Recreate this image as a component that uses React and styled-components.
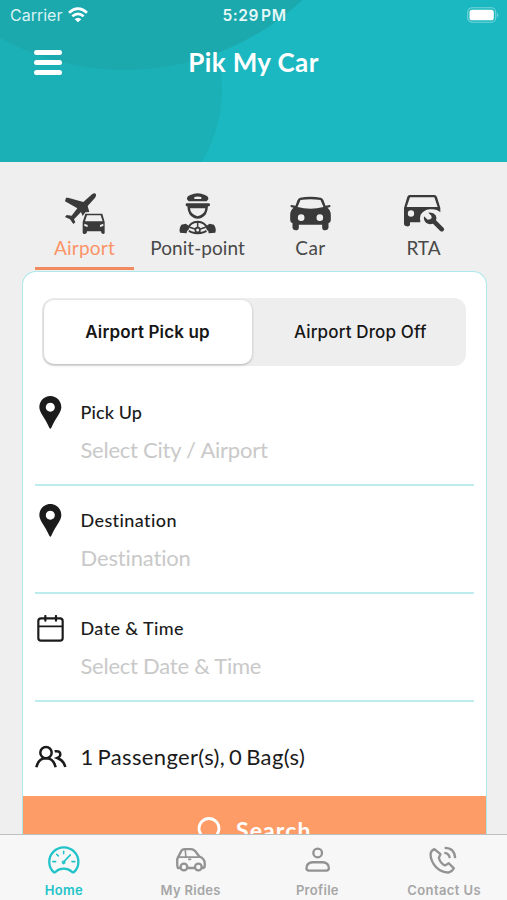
import React from 'react';
import styled, { createGlobalStyle } from 'styled-components';

const GlobalStyle = createGlobalStyle`
    * {
        box-sizing: border-box;
    }

    body {
        margin: 0;
        background: #efefef;
    }
`;

const Screen = styled.div`
    display: flex;
    flex-direction: column;
    width: 507px;
    height: 900px;
    overflow: hidden;
    background: #efefef;
    font-family: Lato, "Liberation Sans", sans-serif;
    font-variant-ligatures: none;
`;

const Header = styled.header`
    position: relative;
    height: 162px;
    flex-shrink: 0;
    background: #1bb8c1;
    color: white;
`;

const HeaderShapes = styled.svg`
    position: absolute;
    inset: 0;
`;

const StatusBar = styled.div`
    position: relative;
    display: grid;
    grid-template-columns: 1fr auto 1fr;
    align-items: center;
    height: 30px;
    padding: 0 8px 0 10px;
    font-family: Inter, sans-serif;
    font-size: 16px;
`;

const Carrier = styled.div`
    display: flex;
    align-items: center;
    gap: 6px;
    color: #d9f3f4;
`;

const Clock = styled.div`
    font-size: 15.5px;
    font-weight: 600;
    letter-spacing: 0.6px;
    word-spacing: -2.5px;
    color: #e6f8f8;
`;

const Battery = styled.svg`
    justify-self: end;
`;

const TitleBar = styled.div`
    position: relative;
    display: grid;
    grid-template-columns: 60px 1fr 60px;
    align-items: center;
    height: 64px;
    padding: 0 34px;
`;

const Title = styled.h1`
    margin: 0;
    text-align: center;
    font-size: 26px;
    font-weight: 700;
    letter-spacing: 0.4px;
`;

const MenuButton = styled.button`
    display: flex;
    flex-direction: column;
    gap: 5px;
    width: 28px;
    padding: 0;
    border: none;
    background: none;
`;

const MenuLine = styled.span`
    height: 5px;
    border-radius: 3px;
    background: white;
`;

const Tabs = styled.nav`
    display: flex;
    height: 109px;
    flex-shrink: 0;
    padding: 30px 27px 0 28px;
`;

const Tab = styled.div`
    display: flex;
    flex-direction: column;
    align-items: center;
    width: 113px;
    color: ${({ $active }) => ($active ? "#fb9467" : "#494949")};
`;

const TabIcon = styled.svg`
    width: 42.67px;
    height: 42.67px;
    color: #3a3a3a;
    flex-shrink: 0;
`;

const TabLabel = styled.span`
    height: 26px;
    line-height: 26px;
    white-space: nowrap;
    font-size: 19px;
    letter-spacing: ${({ $spacing }) => $spacing || "0"};
`;

const TabLine = styled.span`
    width: 99px;
    height: 3px;
    margin-top: 6px;
    background: #f28a5f;
`;

const Card = styled.main`
    flex: 1;
    min-height: 0;
    overflow: hidden;
    margin: 0 20px 0 21.5px;
    border: 1.5px solid #aee8eb;
    border-bottom: none;
    border-radius: 14px 14px 0 0;
    background: white;
`;

const Segment = styled.div`
    display: flex;
    height: 68px;
    margin: 26px 20px 0 19px;
    padding: 2px;
    border-radius: 12px;
    background: #eeeeee;
`;

const SegmentItem = styled.div`
    display: flex;
    flex: ${({ $active }) => ($active ? "0 0 208px" : "1")};
    align-items: center;
    justify-content: center;
    padding-left: ${({ $active }) => ($active ? "0" : "5px")};
    border-radius: 10px;
    font-family: Inter, sans-serif;
    font-size: 17px;
    font-weight: ${({ $active }) => ($active ? 600 : 500)};
    letter-spacing: 0.14px;
    color: #161616;
    background: ${({ $active }) => ($active ? "white" : "transparent")};
    box-shadow: ${({ $active }) => ($active ? "0 1px 3px rgba(0, 0, 0, 0.25)" : "none")};
`;

const Fields = styled.div`
    margin: 12px 12.5px 0 12px;
`;

const Field = styled.div`
    display: flex;
    height: 108px;
    padding-top: 17px;
    border-bottom: 2px solid #bdecee;
`;

const FieldIcon = styled.div`
    display: flex;
    justify-content: center;
    align-items: center;
    width: 32px;
    height: 34px;
    margin-right: 14px;
    color: #1b1b1b;
`;

const FieldText = styled.div`
    display: flex;
    flex-direction: column;
`;

const FieldLabel = styled.span`
    height: 36px;
    line-height: 35px;
    font-size: 18px;
    font-weight: 500;
    letter-spacing: ${({ $spacing }) => $spacing || "0"};
    color: #1b1b1b;
`;

const Placeholder = styled.span`
    height: 36px;
    line-height: 38px;
    font-size: 22px;
    letter-spacing: ${({ $spacing }) => $spacing || "0"};
    color: #c9c9c9;
`;

const Passengers = styled.div`
    display: flex;
    align-items: center;
    height: 94px;
    padding: 15px 0 0;
    font-size: 22px;
    letter-spacing: 0.35px;
    word-spacing: -2px;
    color: #1b1b1b;
`;

const SearchButton = styled.button`
    display: flex;
    justify-content: center;
    align-items: center;
    gap: 14px;
    width: 100%;
    height: 67px;
    padding: 0;
    border: none;
    background: #fe9c67;
    color: white;
    font-family: inherit;
    font-size: 23px;
    font-weight: 700;
    letter-spacing: 1.1px;
`;

const BottomNav = styled.footer`
    display: flex;
    flex-shrink: 0;
    height: 66px;
    padding-top: 9px;
    border-top: 1px solid #bebebe;
    background: #f7f7f7;
`;

const NavItem = styled.div`
    display: flex;
    flex: 1;
    flex-direction: column;
    align-items: center;
    padding-left: 1px;
    color: ${({ $active }) => ($active ? "#22c3c9" : "#929292")};
`;

const NavIcon = styled.svg`
    width: 33.33px;
    height: 33.33px;
    fill: none;
    stroke: currentColor;
    stroke-width: 7.2;
    stroke-linecap: round;
    stroke-linejoin: round;
`;

const NavLabel = styled.span`
    height: 24px;
    line-height: 28px;
    font-family: Inter, sans-serif;
    font-size: 13px;
    font-weight: 600;
    letter-spacing: ${({ $spacing }) => $spacing || "0"};
    color: ${({ $active }) => ($active ? "#22c3c9" : "#a6a6a6")};
`;

const WifiIcon = () => (
    <svg width="20" height="16" viewBox="0 0 60 48" fill="none" stroke="white" strokeWidth="8">
        <path d="M3 17Q30 -7 57 17" />
        <path d="M13 28Q30 13 47 28" />
        <path d="M20 37Q30 28 40 37L30 46Z" fill="white" stroke="none" />
    </svg>
);

const AirportIcon = () => (
    <TabIcon viewBox="129 36 128 128" fill="currentColor">
        <path d="M211 47Q222 37 227 41Q231 47 222 57L203 78L208 96L196 97L188 108L183 96L162 118L166 127L160 132L150 118L135 111L140 105L155 107L172 85L135 64L138 53L144 53L190 66Z" />
        <path fillRule="evenodd" d="M196 101H247L254 126V158Q254 162 249 162Q243 162 243 154H201Q201 162 194 162Q188 162 188 158V126ZM201 106L195 124H248L242 106ZM193 131V138L203 141V135ZM250 131L240 135V141L250 138Z" />
    </TabIcon>
);

const DriverIcon = () => (
    <TabIcon viewBox="469 36 128 128" fill="currentColor">
        <path fillRule="evenodd" d="M502 58Q501 49 512 45Q534 35 556 45Q567 49 566 58L561 64H507ZM524 51V57H545V51Q534 48 524 51Z" />
        <rect x="498" y="70" width="73" height="9" rx="4" />
        <path fillRule="evenodd" d="M503 78H565Q564 106 545 114Q534 118 523 114Q504 106 503 78ZM511 85Q512 104 534 109Q556 104 557 85Z" />
        <path d="M506 144Q512 126 534 125Q556 126 562 144M508 152Q514 159 534 160Q554 159 560 152" fill="none" stroke="currentColor" strokeWidth="6" />
        <path d="M534 126V143M510 142L526 147M558 142L542 147" fill="none" stroke="currentColor" strokeWidth="4.5" />
        <circle cx="534" cy="150" r="7" fill="none" stroke="currentColor" strokeWidth="5" />
        <path d="M485 134L498 131Q507 134 509 143Q507 151 502 153L501 160L481 158Q477 147 485 134Z" />
        <path d="M583 134L570 131Q561 134 559 143Q561 151 566 153L567 160L587 158Q591 147 583 134Z" />
    </TabIcon>
);

const CarIcon = () => (
    <TabIcon viewBox="87.5 36 128 128" fill="currentColor">
        <path fillRule="evenodd" d="M121 53Q152 47 183 53Q189 55 191 61L197 77L210 75Q214 77 211 81L203 83Q213 91 213 105V120Q213 128 206 130V144Q204 151 196 151Q188 151 187 143V134H117V143Q116 151 108 151Q100 151 98 144V130Q91 128 91 120V105Q91 91 101 83L93 81Q90 77 94 75L107 77L113 61Q115 55 121 53ZM122 60L113 81Q152 92 191 81L182 60Q152 56 122 60ZM124 103A10 10 0 1 0 124 123A10 10 0 1 0 124 103ZM180 103A10 10 0 1 0 180 123A10 10 0 1 0 180 103Z" />
    </TabIcon>
);

const RtaIcon = () => (
    <TabIcon viewBox="425 36 128 128" fill="currentColor">
        <path fillRule="evenodd" d="M448 45H522Q528 45 530 51L540 84V97Q528 85 508 88Q490 90 481 104Q477 114 480 127H449V135Q447 140 440 139Q432 139 431 133V84L441 50Q443 45 448 45ZM449 52L439 81H532L522 52ZM452 91A9 9 0 1 0 452 110A9 9 0 1 0 452 91Z" />
        <path d="M504 98Q519 96 526 106Q530 113 527 121L550 144Q554 149 549 153Q544 157 539 152L518 131Q506 135 497 128Q489 121 491 109L502 119L510 118L514 114L513 107Z" />
    </TabIcon>
);

const PinIcon = () => (
    <svg width="22.67" height="33" viewBox="74 400 68 99" fill="currentColor">
        <path fillRule="evenodd" d="M108 400C89 400 75 415 75 434C75 450 92 466 105 495Q108 501 111 495C124 466 141 450 141 434C141 415 127 400 108 400ZM108 420A13.5 13.5 0 1 1 107.9 420Z" />
    </svg>
);

const CalendarIcon = () => (
    <svg width="27" height="27" viewBox="67 403 81 81" fill="none" stroke="currentColor" strokeWidth="6.5" strokeLinecap="round">
        <rect x="71" y="413" width="73" height="67" rx="8" />
        <path d="M92 406V420M124 406V420" />
        <path d="M72 437H143" strokeWidth="5" />
    </svg>
);

const PeopleIcon = () => (
    <svg width="32" height="24" viewBox="60 158 96 72" fill="none" stroke="currentColor" strokeWidth="7.5">
        <circle cx="93" cy="181" r="17" />
        <path d="M64 225Q70 198 93 198Q116 198 122 225" />
        <path d="M119 177Q136 174 136 187Q135 194 127 197Q146 204 151 224" />
    </svg>
);

const SearchIcon = () => (
    <svg width="25" height="26" viewBox="0 0 25 26" fill="none" stroke="white" strokeWidth="2.8" strokeLinecap="round">
        <circle cx="12" cy="11.5" r="10" />
        <path d="M18.5 19L23 24" />
    </svg>
);

const HomeIcon = () => (
    <NavIcon viewBox="143 55 100 100">
        <path d="M162 143Q148 130 148 111A45.5 45.5 0 0 1 239 111Q239 130 225 143Q221 145 218 141Q208 132 193 132Q178 132 169 141Q166 145 162 143Z" />
        <path d="M193 78V85M171 87L176 92M159 110H168M219 110H228" strokeWidth="5" />
        <path d="M193 111L214 89" strokeWidth="5" />
        <path d="M190 108L198 110L197 116L191 118L188 114Z" fill="currentColor" strokeWidth="2" />
    </NavIcon>
);

const RidesIcon = () => (
    <NavIcon viewBox="522 55 100 100">
        <path d="M538 130H532Q530 126 530 117V102L542 78Q545 71 553 71H573Q580 71 586 77L599 94Q616 100 616 116V124Q616 130 609 130M564 130H583" />
        <path d="M532 96H599M555 73L557 95M566 103H572" strokeWidth="5" />
        <circle cx="551" cy="127" r="10.5" />
        <circle cx="596" cy="127" r="10.5" />
    </NavIcon>
);

const ProfileIcon = () => (
    <NavIcon viewBox="141 190 100 100">
        <circle cx="191" cy="218" r="13.5" />
        <path d="M174 247H208Q226 249 226 266Q226 273 218 273H164Q156 273 156 266Q156 249 174 247Z" />
    </NavIcon>
);

const ContactIcon = () => (
    <NavIcon viewBox="522 190 100 100">
        <path d="M543 206Q532 210 531 222Q531 244 549 263Q567 280 588 279Q599 276 604 266L588 250L576 257Q561 250 557 233L562 222Z" />
        <path d="M574 218Q589 219 591 234M575 202Q606 202 608 234" strokeLinecap="butt" />
    </NavIcon>
);

const tabs = [
    { name: "Airport", icon: AirportIcon, spacing: "0.2px", active: true },
    { name: "Ponit-point", icon: DriverIcon, spacing: "0.05px" },
    { name: "Car", icon: CarIcon, spacing: "0.5px" },
    { name: "RTA", icon: RtaIcon, spacing: "0" },
];

const fields = [
    { label: "Pick Up", hint: "Select City / Airport", icon: PinIcon, labelSpacing: "0.1px", hintSpacing: "-0.25px" },
    { label: "Destination", hint: "Destination", icon: PinIcon, labelSpacing: "0.4px", hintSpacing: "-0.15px" },
    { label: "Date & Time", hint: "Select Date & Time", icon: CalendarIcon, labelSpacing: "0.4px", hintSpacing: "-0.25px" },
];

const navItems = [
    { name: "Home", icon: HomeIcon, spacing: "0.35px", active: true },
    { name: "My Rides", icon: RidesIcon, spacing: "0.3px" },
    { name: "Profile", icon: ProfileIcon, spacing: "0.3px" },
    { name: "Contact Us", icon: ContactIcon, spacing: "0.4px" },
];

const App = () => {
    return (
        <Screen>
            <GlobalStyle />
            <Header>
                <HeaderShapes width="507" height="162" viewBox="0 0 507 162">
                    <circle cx="84" cy="90" r="138" fill="#1bb0b6" />
                    <circle cx="125" cy="-190" r="260" fill="#1ba9ae" />
                </HeaderShapes>
                <StatusBar>
                    <Carrier>Carrier <WifiIcon /></Carrier>
                    <Clock>5:29 PM</Clock>
                    <Battery width="32" height="16" viewBox="0 0 32 16">
                        <rect x="0.7" y="0.7" width="28" height="14.6" rx="4.5" fill="none" stroke="#76d4d9" strokeWidth="1.1" />
                        <rect x="2.5" y="2.7" width="24.3" height="10.6" rx="2.6" fill="white" />
                        <path d="M30.2 5.5Q32.5 8 30.2 10.5Z" fill="#76d4d9" />
                    </Battery>
                </StatusBar>
                <TitleBar>
                    <MenuButton>
                        <MenuLine />
                        <MenuLine />
                        <MenuLine />
                    </MenuButton>
                    <Title>Pik My Car</Title>
                </TitleBar>
            </Header>
            <Tabs>
                {tabs.map(({ name, icon: Icon, spacing, active }) => (
                    <Tab key={name} $active={active}>
                        <Icon />
                        <TabLabel $spacing={spacing}>{name}</TabLabel>
                        {active && <TabLine />}
                    </Tab>
                ))}
            </Tabs>
            <Card>
                <Segment>
                    <SegmentItem $active>Airport Pick up</SegmentItem>
                    <SegmentItem>Airport Drop Off</SegmentItem>
                </Segment>
                <Fields>
                    {fields.map(({ label, hint, icon: Icon, labelSpacing, hintSpacing }) => (
                        <Field key={label}>
                            <FieldIcon><Icon /></FieldIcon>
                            <FieldText>
                                <FieldLabel $spacing={labelSpacing}>{label}</FieldLabel>
                                <Placeholder $spacing={hintSpacing}>{hint}</Placeholder>
                            </FieldText>
                        </Field>
                    ))}
                    <Passengers>
                        <FieldIcon><PeopleIcon /></FieldIcon>
                        1 Passenger(s), 0 Bag(s)
                    </Passengers>
                </Fields>
                <SearchButton><SearchIcon /> Search</SearchButton>
            </Card>
            <BottomNav>
                {navItems.map(({ name, icon: Icon, spacing, active }) => (
                    <NavItem key={name} $active={active}>
                        <Icon />
                        <NavLabel $active={active} $spacing={spacing}>{name}</NavLabel>
                    </NavItem>
                ))}
            </BottomNav>
        </Screen>
    );
}

export default App;
